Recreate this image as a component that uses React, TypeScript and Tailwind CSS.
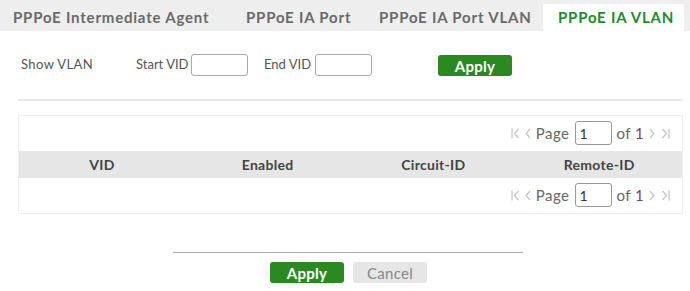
import { useState } from 'react'

const font = { fontFamily: 'Lato, "Open Sans", sans-serif' }

function First({ flip }: { flip?: boolean }) {
  return (
    <svg width="9" height="11" viewBox="0 0 9 11" className={flip ? 'rotate-180' : ''}>
      <path d="M1 0.5v10M7.5 1L3.5 5.5l4 4.5" fill="none" stroke="#c4c4c4" strokeWidth="1.2" />
    </svg>
  )
}

function Prev({ flip }: { flip?: boolean }) {
  return (
    <svg width="6" height="11" viewBox="0 0 6 11" className={flip ? 'rotate-180' : ''}>
      <path d="M5 1L1.2 5.5 5 10" fill="none" stroke="#c4c4c4" strokeWidth="1.2" />
    </svg>
  )
}

function Pager() {
  return (
    <div className="flex h-[26px] items-center justify-end whitespace-nowrap pr-[12px] text-[15px] text-[#666]">
      <First />
      <span className="ml-[5px] flex">
        <Prev />
      </span>
      <span className="ml-[5px] tracking-[0.5px]">Page</span>
      <input
        defaultValue="1"
        className="ml-[5px] h-[24px] w-[37px] rounded-[3px] border border-[#999] px-[4px] text-[14px] text-[#333] outline-none"
      />
      <span className="ml-[5px] tracking-[0.4px]">
        of <span className="text-[#8a3a58]">1</span>
      </span>
      <span className="ml-[5px] flex">
        <Prev flip />
      </span>
      <span className="ml-[6px] flex">
        <First flip />
      </span>
    </div>
  )
}

const tabs = [
  { label: 'PPPoE Intermediate Agent', w: 'w-[231px] pl-[13px]' },
  { label: 'PPPoE IA Port', w: 'w-[133px] pl-[15px]' },
  { label: 'PPPoE IA Port VLAN', w: 'w-[179px] pl-[15px]' },
  { label: 'PPPoE IA VLAN', w: 'w-[141px] pl-[15px]' },
]

export default function App() {
  const [tab] = useState(3)

  return (
    <div className="h-[291px] w-[690px] overflow-hidden bg-white" style={font}>
      <div className="flex h-[31px] items-end overflow-hidden bg-[#eeeeee]">
        {tabs.map((t, i) => (
          <div
            key={t.label}
            className={
              'flex h-[27px] shrink-0 items-center whitespace-nowrap text-[15px] font-bold tracking-[0.8px] ' +
              t.w +
              (i === tab ? ' bg-white text-[#1d8a2c]' : ' text-[#6a6a6a]')
            }
          >
            {t.label}
          </div>
        ))}
      </div>

      <div className="flex items-center whitespace-nowrap pt-[23px] text-[13px] text-[#555]">
        <span className="ml-[21px] w-[115px] shrink-0 tracking-[0.4px]">Show VLAN</span>
        <span className="w-[55px] shrink-0">Start VID</span>
        <input className="h-[22px] w-[57px] shrink-0 rounded-[3px] border border-[#aaa] outline-none" />
        <span className="ml-[16px] w-[51px] shrink-0">End VID</span>
        <input className="h-[22px] w-[57px] shrink-0 rounded-[3px] border border-[#aaa] outline-none" />
        <button className="ml-[66px] h-[21px] w-[74px] shrink-0 rounded-[3px] bg-[#2a8a20] text-[15px] font-bold tracking-[0.3px] text-white">
          Apply
        </button>
      </div>

      <div className="ml-[18px] mr-[7px] mt-[23px] h-[2px] bg-[#e8e8e8]" />

      <div className="ml-[18px] mr-[7px] mt-[14px] border border-[#eeeeee] pb-[5px] pt-[4px]">
        <Pager />
        <div className="mt-[5px] grid h-[27px] grid-cols-4 items-center bg-[#e6e6e6] text-[14px] font-bold tracking-[0.3px] text-[#444]">
          <span className="text-center">VID</span>
          <span className="text-center">Enabled</span>
          <span className="text-center">Circuit-ID</span>
          <span className="text-center">Remote-ID</span>
        </div>
        <div className="mt-[4px]">
          <Pager />
        </div>
      </div>

      <div className="ml-[173px] mt-[38px] h-px w-[350px] bg-[#aaaaaa]" />
      <div className="ml-[270px] mt-[9px] flex gap-[9px]">
        <button className="h-[21px] w-[74px] rounded-[3px] bg-[#2a8a20] text-[15px] font-bold tracking-[0.3px] text-white">
          Apply
        </button>
        <button className="h-[21px] w-[74px] rounded-[3px] bg-[#e6e6e6] text-[15px] tracking-[0.3px] text-[#888]">
          Cancel
        </button>
      </div>
    </div>
  )
}
